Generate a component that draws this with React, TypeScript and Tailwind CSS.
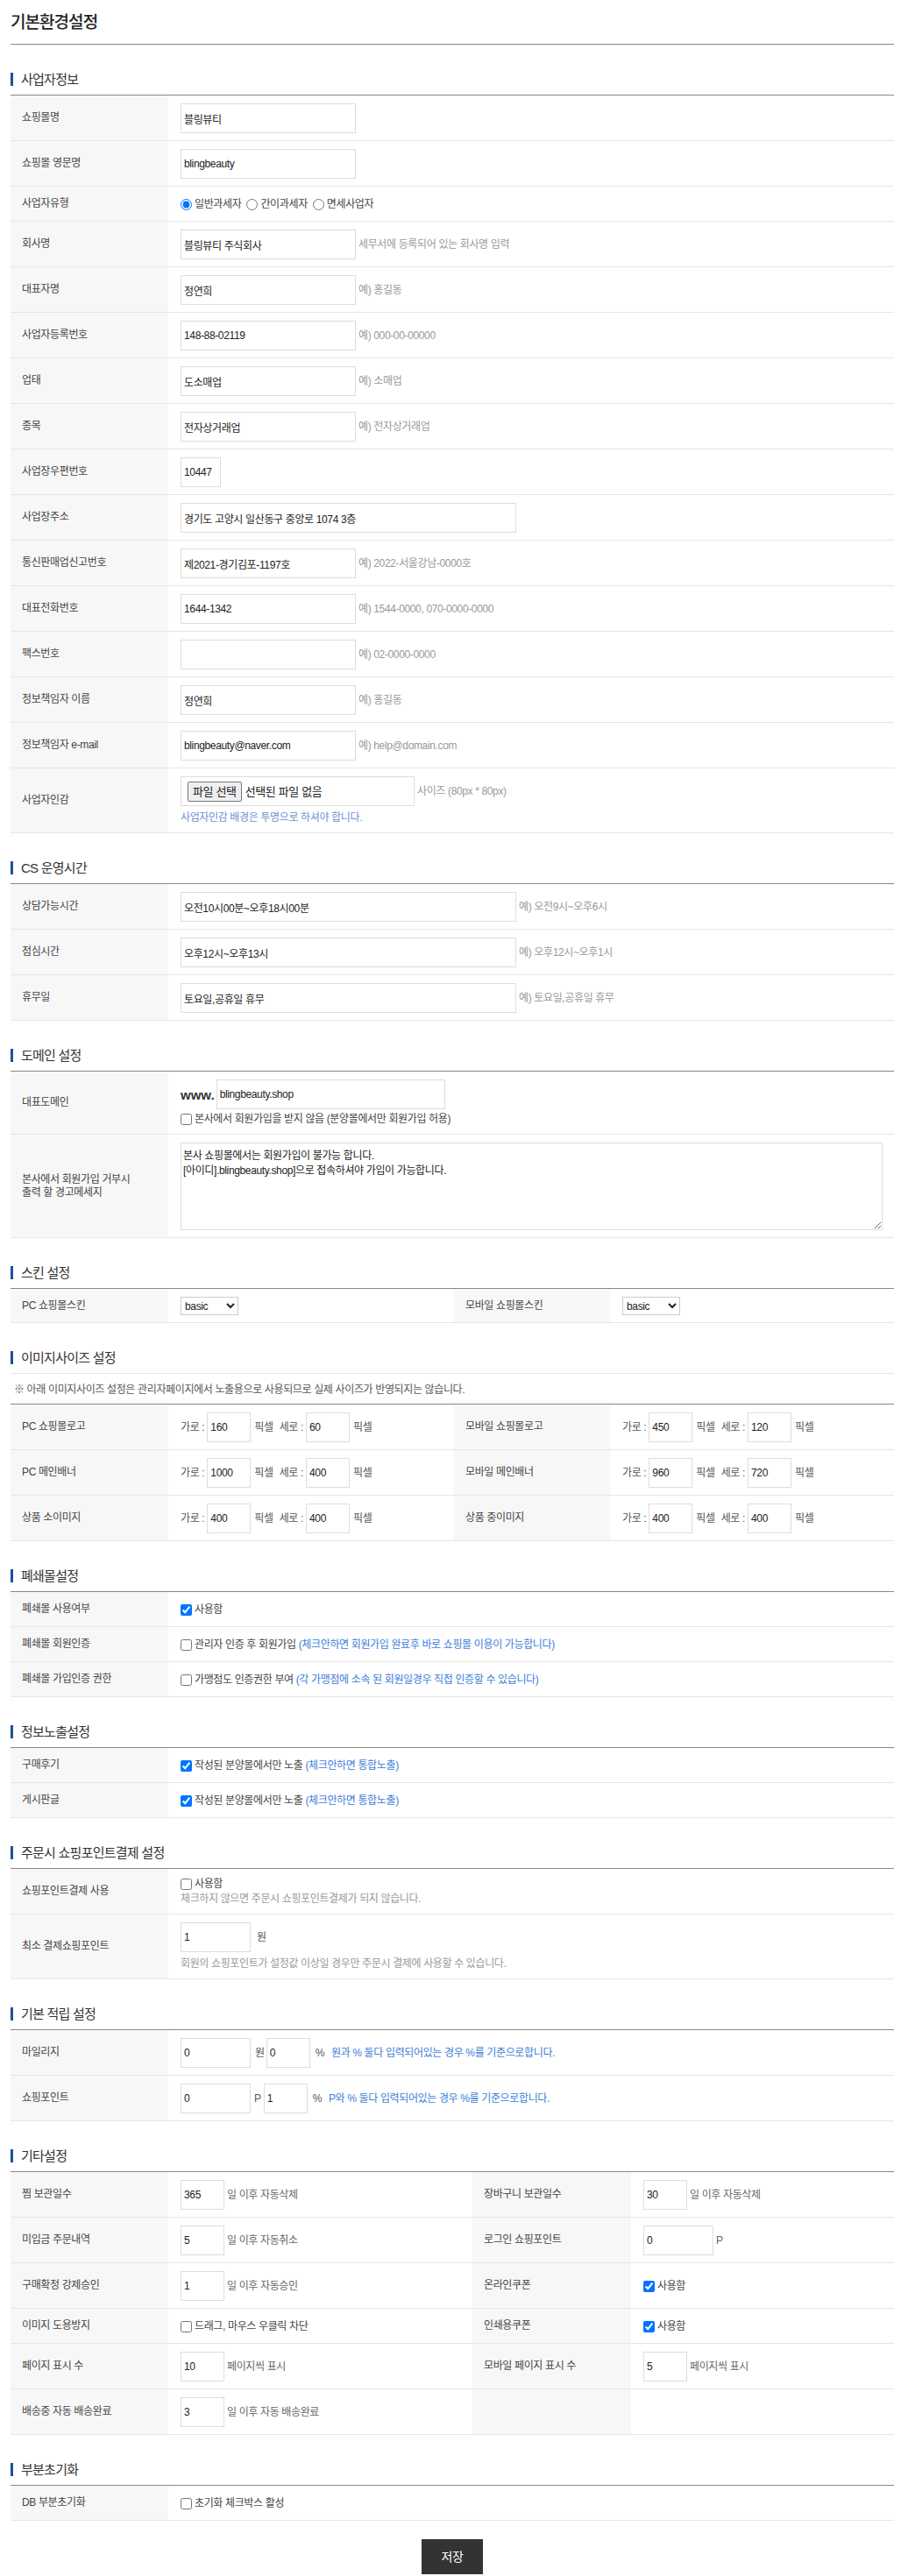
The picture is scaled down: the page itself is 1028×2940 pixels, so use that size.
import React from "react"

const inp = "h-[34px] border border-[#ddd] bg-white px-[3px] text-[12px] text-[#222] outline-none"

function Header({ title }: { title: string }) {
    return (
        <div className="mt-[21px] flex h-[36px] items-center">
            <span className="h-[15px] w-[3px] bg-[#1d4f9e]" />
            <span className="ml-[9px] text-[15px] tracking-[-0.05em] text-[#333]">{title}</span>
        </div>
    )
}

function Label({ children, className = "w-[180px]" }: { children?: React.ReactNode; className?: string }) {
    return <div className={`flex shrink-0 items-center bg-[#f7f7f7] px-[13px] leading-[15px] text-[#444] ${className}`}>{children}</div>
}

function Row({ label, children }: { label: React.ReactNode; children: React.ReactNode }) {
    return (
        <div className="flex border-b border-[#e6e6e6]">
            <Label>{label}</Label>
            <div className="flex min-h-[39px] flex-1 flex-col justify-center px-[14px] pb-[8px] pt-[9px]">{children}</div>
        </div>
    )
}

function Row4({ l1, v1, l2, v2, wide = false, short = false }: { l1: string; v1: React.ReactNode; l2?: string; v2?: React.ReactNode; wide?: boolean; short?: boolean }) {
    return (
        <div className="flex border-b border-[#e6e6e6]">
            <Label>{l1}</Label>
            <div className={`flex shrink-0 items-center pb-[8px] pl-[14px] pt-[9px] ${short ? "min-h-[38px]" : "min-h-[39px]"} ${wide ? "w-[347px]" : "w-[326px]"}`}>{v1}</div>
            <Label className={wide ? "w-[181px]" : "w-[178px]"}>{l2}</Label>
            <div className="flex flex-1 items-center pb-[8px] pl-[14px] pt-[9px]">{v2}</div>
        </div>
    )
}

function Check({ checked = false, children }: { checked?: boolean; children: React.ReactNode }) {
    return (
        <label className="flex items-center text-[#444]">
            <input type="checkbox" defaultChecked={checked} className="mr-[3px] h-[13px] w-[13px]" />
            <span>{children}</span>
        </label>
    )
}

function Hint({ children }: { children: React.ReactNode }) {
    return <span className="ml-[3px] text-[#999]">{children}</span>
}

function Size({ w, h }: { w: string; h: string }) {
    return (
        <div className="flex items-center text-[#555]">
            <span>가로 :</span>
            <input className={`${inp} ml-[3px] w-[50px]`} defaultValue={w} />
            <span className="ml-[4px]">픽셀</span>
            <span className="ml-[7px]">세로 :</span>
            <input className={`${inp} ml-[3px] w-[50px]`} defaultValue={h} />
            <span className="ml-[4px]">픽셀</span>
        </div>
    )
}

function Days({ value, text, wide = false }: { value: string; text: string; wide?: boolean }) {
    return (
        <div className="flex items-center text-[#666]">
            <input className={`${inp} ${wide ? "w-[80px]" : "w-[50px]"}`} defaultValue={value} />
            <span className="ml-[3px]">{text}</span>
        </div>
    )
}

function Skin() {
    return (
        <select className="h-[21px] w-[66px] border border-[#ccc] bg-white text-[12px] text-[#222]">
            <option>basic</option>
        </select>
    )
}

const bizRows: [string, string, string, string][] = [
    ["회사명", "블링뷰티 주식회사", "세무서에 등록되어 있는 회사명 입력", "w-[200px]"],
    ["대표자명", "정연희", "예) 홍길동", "w-[200px]"],
    ["사업자등록번호", "148-88-02119", "예) 000-00-00000", "w-[200px]"],
    ["업태", "도소매업", "예) 소매업", "w-[200px]"],
    ["종목", "전자상거래업", "예) 전자상거래업", "w-[200px]"],
    ["사업장우편번호", "10447", "", "w-[46px]"],
    ["사업장주소", "경기도 고양시 일산동구 중앙로 1074 3층", "", "w-[383px]"],
    ["통신판매업신고번호", "제2021-경기김포-1197호", "예) 2022-서울강남-0000호", "w-[200px]"],
    ["대표전화번호", "1644-1342", "예) 1544-0000, 070-0000-0000", "w-[200px]"],
    ["팩스번호", "", "예) 02-0000-0000", "w-[200px]"],
    ["정보책임자 이름", "정연희", "예) 홍길동", "w-[200px]"],
    ["정보책임자 e-mail", "blingbeauty@naver.com", "예) help@domain.com", "w-[200px]"],
]

const csRows = [
    ["상담가능시간", "오전10시00분~오후18시00분", "예) 오전9시~오후6시"],
    ["점심시간", "오후12시~오후13시", "예) 오후12시~오후1시"],
    ["휴무일", "토요일,공휴일 휴무", "예) 토요일,공휴일 휴무"],
]

export default function App() {
    return (
        <div className="bg-white pb-[11px] pl-[12px] pr-[8px] font-['Liberation_Sans','Noto_Sans_CJK_KR',sans-serif] text-[12px] leading-[17px] tracking-[-0.03em] text-[#333]">
            <div className="flex h-[51px] items-center border-b border-[#888]">
                <h1 className="text-[19px] font-medium tracking-[-0.05em] text-[#222]">기본환경설정</h1>
            </div>

            <Header title="사업자정보" />
            <div className="border-t border-[#888]">
                <Row label="쇼핑몰명">
                    <input className={`${inp} w-[200px]`} defaultValue="블링뷰티" />
                </Row>
                <Row label="쇼핑몰 영문명">
                    <input className={`${inp} w-[200px]`} defaultValue="blingbeauty" />
                </Row>
                <Row label="사업자유형">
                    <div className="flex h-[22px] items-center text-[#444]">
                        <label className="flex items-center"><input type="radio" name="biztype" defaultChecked className="mr-[3px]" />일반과세자</label>
                        <label className="ml-[6px] flex items-center"><input type="radio" name="biztype" className="mr-[3px]" />간이과세자</label>
                        <label className="ml-[6px] flex items-center"><input type="radio" name="biztype" className="mr-[3px]" />면세사업자</label>
                    </div>
                </Row>
                {bizRows.map(([label, value, hint, w]) => (
                    <Row key={label} label={label}>
                        <div className="flex items-center">
                            <input className={`${inp} ${w}`} defaultValue={value} />
                            {hint && <Hint>{hint}</Hint>}
                        </div>
                    </Row>
                ))}
                <Row label="사업자인감">
                    <div className="flex items-center">
                        <div className="flex h-[34px] w-[267px] items-center border border-[#ddd] px-[7px]">
                            <span className="flex h-[23px] items-center rounded-[2px] border border-[#767676] bg-[#efefef] px-[5px] text-[13px] text-[#222]">파일 선택</span>
                            <span className="ml-[4px] text-[13px] text-[#222]">선택된 파일 없음</span>
                        </div>
                        <Hint>사이즈 (80px * 80px)</Hint>
                    </div>
                    <div className="mt-[5px] text-[#6b8fd4]">사업자인감 배경은 투명으로 하셔야 합니다.</div>
                </Row>
            </div>

            <Header title="CS 운영시간" />
            <div className="border-t border-[#888]">
                {csRows.map(([label, value, hint]) => (
                    <Row key={label} label={label}>
                        <div className="flex items-center">
                            <input className={`${inp} w-[383px]`} defaultValue={value} />
                            <Hint>{hint}</Hint>
                        </div>
                    </Row>
                ))}
            </div>

            <Header title="도메인 설정" />
            <div className="border-t border-[#888]">
                <Row label="대표도메인">
                    <div className="flex items-center">
                        <span className="mr-[2px] text-[15px] font-bold tracking-normal text-[#333]">www.</span>
                        <input className={`${inp} w-[261px]`} defaultValue="blingbeauty.shop" />
                    </div>
                    <div className="mt-[3px]">
                        <Check>본사에서 회원가입을 받지 않음 (분양몰에서만 회원가입 허용)</Check>
                    </div>
                </Row>
                <Row label={<span>본사에서 회원가입 거부시<br />출력 할 경고메세지</span>}>
                    <textarea
                        className="h-[100px] w-[801px] border border-[#ddd] px-[2px] pt-[6px] text-[12px] leading-[17px] text-[#222] outline-none"
                        defaultValue={"본사 쇼핑몰에서는 회원가입이 불가능 합니다.\n[아이디].blingbeauty.shop]으로 접속하셔야 가입이 가능합니다."}
                    />
                </Row>
            </div>

            <Header title="스킨 설정" />
            <div className="border-t border-[#888]">
                <Row4 short l1="PC 쇼핑몰스킨" v1={<Skin />} l2="모바일 쇼핑몰스킨" v2={<Skin />} />
            </div>

            <Header title="이미지사이즈 설정" />
            <div className="flex h-[35px] items-center border-t border-[#e6e6e6] pl-[4px] pt-[3px] text-[#555]">
                ※ 아래 이미지사이즈 설정은 관리자페이지에서 노출용으로 사용되므로 실제 사이즈가 반영되지는 않습니다.
            </div>
            <div className="border-t border-[#888]">
                <Row4 l1="PC 쇼핑몰로고" v1={<Size w="160" h="60" />} l2="모바일 쇼핑몰로고" v2={<Size w="450" h="120" />} />
                <Row4 l1="PC 메인배너" v1={<Size w="1000" h="400" />} l2="모바일 메인배너" v2={<Size w="960" h="720" />} />
                <Row4 l1="상품 소이미지" v1={<Size w="400" h="400" />} l2="상품 중이미지" v2={<Size w="400" h="400" />} />
            </div>

            <Header title="폐쇄몰설정" />
            <div className="border-t border-[#888]">
                <Row label="폐쇄몰 사용여부">
                    <Check checked>사용함</Check>
                </Row>
                <Row label="폐쇄몰 회원인증">
                    <Check>관리자 인증 후 회원가입 <span className="text-[#3b7dd8]">(체크안하면 회원가입 완료후 바로 쇼핑몰 이용이 가능합니다)</span></Check>
                </Row>
                <Row label="폐쇄몰 가입인증 권한">
                    <Check>가맹점도 인증권한 부여 <span className="text-[#3b7dd8]">(각 가맹점에 소속 된 회원일경우 직접 인증할 수 있습니다)</span></Check>
                </Row>
            </div>

            <Header title="정보노출설정" />
            <div className="border-t border-[#888]">
                <Row label="구매후기">
                    <Check checked>작성된 분양몰에서만 노출 <span className="text-[#3b7dd8]">(체크안하면 통합노출)</span></Check>
                </Row>
                <Row label="게시판글">
                    <Check checked>작성된 분양몰에서만 노출 <span className="text-[#3b7dd8]">(체크안하면 통합노출)</span></Check>
                </Row>
            </div>

            <Header title="주문시 쇼핑포인트결제 설정" />
            <div className="border-t border-[#888]">
                <Row label="쇼핑포인트결제 사용">
                    <Check>사용함</Check>
                    <div className="text-[#999]">체크하지 않으면 주문시 쇼핑포인트결제가 되지 않습니다.</div>
                </Row>
                <Row label="최소 결제쇼핑포인트">
                    <div className="flex items-center text-[#555]">
                        <input className={`${inp} w-[80px]`} defaultValue="1" />
                        <span className="ml-[7px]">원</span>
                    </div>
                    <div className="mt-[5px] text-[#999]">회원의 쇼핑포인트가 설정값 이상일 경우만 주문시 결제에 사용할 수 있습니다.</div>
                </Row>
            </div>

            <Header title="기본 적립 설정" />
            <div className="border-t border-[#888]">
                <Row label="마일리지">
                    <div className="flex items-center text-[#555]">
                        <input className={`${inp} w-[80px]`} defaultValue="0" />
                        <span className="ml-[5px]">원</span>
                        <input className={`${inp} ml-[2px] w-[50px]`} defaultValue="0" />
                        <span className="ml-[6px]">%</span>
                        <span className="ml-[8px] text-[#3b7dd8]">원과 % 둘다 입력되어있는 경우 %를 기준으로합니다.</span>
                    </div>
                </Row>
                <Row label="쇼핑포인트">
                    <div className="flex items-center text-[#555]">
                        <input className={`${inp} w-[80px]`} defaultValue="0" />
                        <span className="ml-[4px]">P</span>
                        <input className={`${inp} ml-[3px] w-[50px]`} defaultValue="1" />
                        <span className="ml-[6px]">%</span>
                        <span className="ml-[8px] text-[#3b7dd8]">P와 % 둘다 입력되어있는 경우 %를 기준으로합니다.</span>
                    </div>
                </Row>
            </div>

            <Header title="기타설정" />
            <div className="border-t border-[#888]">
                <Row4 wide l1="찜 보관일수" v1={<Days value="365" text="일 이후 자동삭제" />} l2="장바구니 보관일수" v2={<Days value="30" text="일 이후 자동삭제" />} />
                <Row4 wide l1="미입금 주문내역" v1={<Days value="5" text="일 이후 자동취소" />} l2="로그인 쇼핑포인트" v2={<Days wide value="0" text="P" />} />
                <Row4 wide l1="구매확정 강제승인" v1={<Days value="1" text="일 이후 자동승인" />} l2="온라인쿠폰" v2={<Check checked>사용함</Check>} />
                <Row4 wide l1="이미지 도용방지" v1={<Check>드래그, 마우스 우클릭 차단</Check>} l2="인쇄용쿠폰" v2={<Check checked>사용함</Check>} />
                <Row4 wide l1="페이지 표시 수" v1={<Days value="10" text="페이지씩 표시" />} l2="모바일 페이지 표시 수" v2={<Days value="5" text="페이지씩 표시" />} />
                <Row4 wide l1="배송중 자동 배송완료" v1={<Days value="3" text="일 이후 자동 배송완료" />} />
            </div>

            <Header title="부분초기화" />
            <div className="border-t border-[#888]">
                <Row label="DB 부분초기화">
                    <Check>초기화 체크박스 활성</Check>
                </Row>
            </div>

            <div className="mt-[21px] flex justify-center">
                <button className="h-[40px] w-[70px] bg-[#333] text-[14px] text-white">저장</button>
            </div>
        </div>
    )
}
